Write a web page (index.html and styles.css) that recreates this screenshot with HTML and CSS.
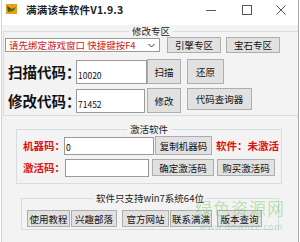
FILE: index.html
```html
<!DOCTYPE html>
<html lang="zh-CN">
<head>
    <meta charset="UTF-8">
    <title>满满该车软件V1.9.3</title>
    <link rel="stylesheet" href="styles.css">
</head>
<body>
   <div class="window">
       <div class="titlebar">
           <svg class="app_icon" width="11" height="10" viewBox="0 0 11 10">
               <rect width="11" height="10" fill="#e3a21a"/>
               <path d="M1 2 L6 5 L10 3 L7 7 L2 8 Z" fill="#5a4a12"/>
               <path d="M2 7 L9 5" stroke="#3d8a2a" stroke-width="1"/>
           </svg>
           <span class="title">满满该车软件V1.9.3</span>
           <div class="controls">
               <svg width="10" height="10" viewBox="0 0 10 10"><path d="M0 5.5 H10" stroke="#555" stroke-width="1"/></svg>
               <svg width="10" height="10" viewBox="0 0 10 10"><rect x="0.5" y="0.5" width="9" height="9" fill="none" stroke="#555" stroke-width="1"/></svg>
               <svg width="10" height="10" viewBox="0 0 10 10"><path d="M0.5 0.5 L9.5 9.5 M9.5 0.5 L0.5 9.5" stroke="#555" stroke-width="1"/></svg>
           </div>
       </div>

       <div class="client">
           <fieldset class="group group_edit">
               <legend>修改专区</legend>
               <div class="row row_top">
                   <div class="combo">
                       <span>请先绑定游戏窗口 快捷键按F4</span>
                       <svg width="7" height="5" viewBox="0 0 7 5"><path d="M0.5 1 L3.5 4 L6.5 1" fill="none" stroke="#333" stroke-width="1"/></svg>
                   </div>
                   <button class="btn btn_zone">引擎专区</button>
                   <button class="btn btn_zone">宝石专区</button>
               </div>
               <div class="row row_code">
                   <div class="big_label">扫描代码：</div>
                   <div class="code_input">10020</div>
                   <button class="btn btn_small">扫描</button>
                   <button class="btn btn_small btn_restore">还原</button>
               </div>
               <div class="row row_code row_code2">
                   <div class="big_label">修改代码：</div>
                   <div class="code_input code_input2">71452</div>
                   <button class="btn btn_small">修改</button>
                   <button class="btn btn_query">代码查询器</button>
               </div>
           </fieldset>

           <fieldset class="group group_active">
               <legend>激活软件</legend>
               <div class="row row_act">
                   <div class="red_label">机器码：</div>
                   <div class="act_input">0</div>
                   <button class="btn btn_copy">复制机器码</button>
                   <div class="red_label status">软件：未激活</div>
               </div>
               <div class="row row_act row_act2">
                   <div class="red_label">激活码：</div>
                   <div class="act_input act_input2"></div>
                   <button class="btn btn_confirm">确定激活码</button>
                   <button class="btn btn_buy">购买激活码</button>
               </div>
           </fieldset>

           <fieldset class="group group_links">
               <legend>软件只支持win7系统64位</legend>
               <div class="row row_links">
                   <button class="btn btn_link">使用教程</button>
                   <button class="btn btn_link btn_link2">兴趣部落</button>
                   <button class="btn btn_link btn_link3">官方网站</button>
                   <button class="btn btn_link btn_link4">联系满满</button>
                   <button class="btn btn_link btn_link5">版本查询</button>
               </div>
           </fieldset>

           <div class="watermark">
               <div class="wm_big">绿色资源网</div>
               <div class="wm_small">www.downcc.com</div>
           </div>
       </div>
   </div>
</body>
</html>
```

FILE: styles.css
```css
        body{
            margin: 0;
            background: #fff;
            font-family: "Noto Sans CJK SC", "DejaVu Sans", sans-serif;
        }

        .window{
            position: relative;
            width: 296px;
            height: 242px;
            border-left: 1px solid #d4d4d4;
            border-right: 1px solid #a9a9a9;
            margin-left: 1px;
            background: #f3f3f3;
            overflow: hidden;
        }

        .titlebar{
            height: 25px;
            background: #fff;
            display: flex;
            align-items: center;
        }

        .app_icon{
            margin-left: 4px;
            margin-top: -7px;
        }

        .title{
            margin-left: 9px;
            margin-top: -6px;
            font-size: 10.5px;
            font-weight: bold;
            color: #222;
            letter-spacing: 0.2px;
        }

        .controls{
            margin-left: auto;
            display: flex;
            gap: 24px;
            margin-right: 12px;
            margin-top: -6px;
        }

        .controls svg:first-child{
            margin-right: 2px;
        }

        .group{
            margin: 0;
            padding: 0;
            border: 1px solid #d3dde3;
            min-width: 0;
        }

        .group>legend{
            margin: 0 auto;
            padding: 0 3px;
            font-size: 9.5px;
            line-height: 12px;
            color: #222;
        }

        .row{
            display: flex;
            align-items: center;
        }

        .btn{
            box-sizing: border-box;
            margin: 0;
            padding: 0;
            background: #e1e1e1;
            border: 1px solid #adadad;
            font-family: "Noto Sans CJK SC", "DejaVu Sans", sans-serif;
            font-size: 9.5px;
            color: #111;
        }

        /* 修改专区 */
        .group_edit{
            width: 294px;
            margin-left: 1px;
            padding-bottom: 2px;
        }

        .row_top{
            height: 16px;
        }

        .combo{
            box-sizing: border-box;
            width: 155px;
            height: 14px;
            margin-left: 1px;
            border: 1px solid #9a9a9a;
            background: #fff;
            display: flex;
            align-items: center;
            justify-content: space-between;
            padding: 0 4px 0 3px;
            font-size: 9.5px;
            color: #d01818;
            white-space: nowrap;
        }

        .btn_zone{
            width: 54px;
            height: 16px;
            margin-left: 7px;
        }

        .btn_zone + .btn_zone{
            margin-left: 5px;
        }

        .row_code{
            height: 25px;
            margin-top: 6px;
        }

        .row_code2{
            margin-top: 4px;
        }

        .big_label{
            width: 68px;
            margin-left: 4px;
            font-size: 14.5px;
            font-weight: bold;
            color: #111;
            white-space: nowrap;
        }

        .code_input{
            box-sizing: border-box;
            width: 71px;
            height: 24px;
            border: 1px solid #9a9a9a;
            background: #fff;
            font-size: 8.5px;
            line-height: 24px;
            padding: 2px 0 0 1px;
            color: #111;
        }

        .code_input2{
            width: 69px;
            margin-right: 2px;
        }

        .btn_small{
            width: 34px;
            height: 25px;
        }

        .btn_restore{
            width: 37px;
            margin-left: 6px;
        }

        .btn_query{
            width: 65px;
            height: 22px;
            margin-left: 6px;
            align-self: flex-start;
        }

        /* 激活软件 */
        .group_active{
            width: 264px;
            margin: 7px 0 0 14px;
            padding-bottom: 6px;
        }

        .row_act{
            height: 19px;
            margin-top: 1px;
        }

        .row_act2{
            margin-top: 3px;
        }

        .red_label{
            width: 41px;
            margin-left: 6px;
            font-size: 10.5px;
            font-weight: bold;
            color: #e01010;
            white-space: nowrap;
        }

        .act_input{
            box-sizing: border-box;
            width: 90px;
            height: 18px;
            border: 1px solid #9a9a9a;
            background: #fff;
            font-size: 8.5px;
            line-height: 16px;
            padding: 1px 0 0 1px;
        }

        .act_input2{
            width: 84px;
            margin-left: 1px;
        }

        .btn_copy{
            width: 57px;
            height: 19px;
            margin-left: 1px;
        }

        .status{
            width: auto;
            margin-left: 4px;
        }

        .btn_confirm{
            width: 62px;
            height: 17px;
            margin-left: 3px;
        }

        .btn_buy{
            width: 58px;
            height: 17px;
            margin-left: 3px;
        }

        /* 链接 */
        .group_links{
            width: 256px;
            margin: 8px 0 0 19px;
            padding-bottom: 2px;
        }

        .row_links{
            height: 17px;
            margin-top: 6px;
        }

        .btn_link{
            width: 43px;
            height: 17px;
            margin-left: 5px;
        }

        .btn_link2{
            width: 46px;
            margin-left: 1px;
        }

        .btn_link3{
            width: 47px;
            margin-left: 5px;
        }

        .btn_link4{
            width: 42px;
            margin-left: 1px;
        }

        .btn_link5{
            width: 45px;
            margin-left: 5px;
        }

        .watermark{
            position: absolute;
            left: 193px;
            top: 196px;
            white-space: nowrap;
            pointer-events: none;
        }

        .wm_big{
            font-size: 17px;
            line-height: 24px;
            letter-spacing: 1px;
            color: rgba(110, 200, 90, 0.42);
        }

        .wm_small{
            margin-left: 4px;
            margin-top: 1px;
            font-size: 9px;
            line-height: 11px;
            letter-spacing: 0.5px;
            color: rgba(120, 190, 140, 0.45);
        }
```
